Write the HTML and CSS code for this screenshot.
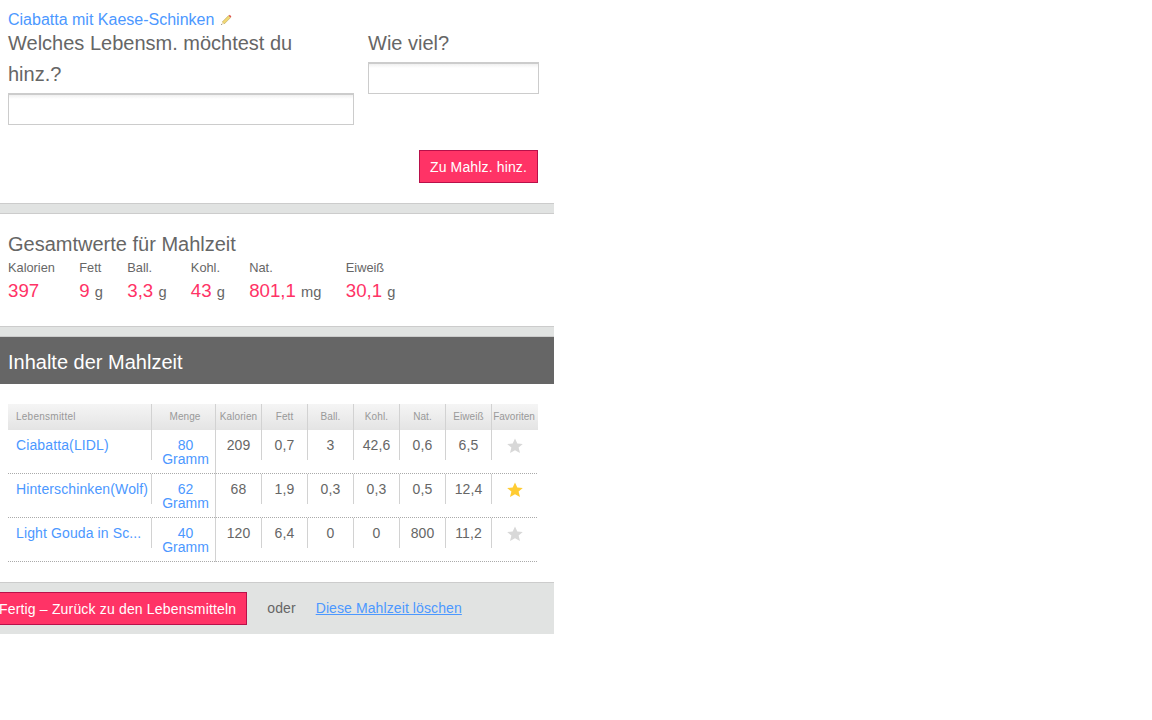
FILE: index.html
```html
<!DOCTYPE html>
<html lang="de">
<head>
<meta charset="utf-8">
<title>Mahlzeit</title>
<link rel="stylesheet" href="styles.css">
</head>
<body>
<main class="page">
  <section class="add">
    <div class="meal-name">
      <a href="#" class="link">Ciabatta mit Kaese-Schinken</a>
      <svg class="pencil" width="12" height="12" viewBox="0 0 12 12" aria-hidden="true">
        <path d="M2.200 8 8.600 1.600l2 2L4.200 10z" fill="#f2d873" stroke="#a8964f" stroke-width=".5"/>
        <path d="m8.800 1.800 1-1 1.600 1.600-1 1z" fill="#e0504f"/>
        <path d="M2.200 8 1.200 11l3-1z" fill="#f1e2c0"/>
        <path d="M1.500 10.100 1.200 11l.9-.3z" fill="#333"/>
      </svg>
    </div>
    <div class="fields">
      <label class="field field-food">
        <span class="q">Welches Lebensm. möchtest du hinz.?</span>
        <input class="input" type="text">
      </label>
      <label class="field field-qty">
        <span class="q">Wie viel?</span>
        <input class="input" type="text">
      </label>
    </div>
    <div class="add-action"><button class="btn" type="button">Zu Mahlz. hinz.</button></div>
  </section>

  <div class="bar"></div>

  <section class="totals">
    <h2 class="q totals-title">Gesamtwerte für Mahlzeit</h2>
    <div class="stats">
      <div><div class="stat-label">Kalorien</div><div class="stat-val">397</div></div>
      <div><div class="stat-label">Fett</div><div class="stat-val">9 <span class="unit">g</span></div></div>
      <div><div class="stat-label">Ball.</div><div class="stat-val">3,3 <span class="unit">g</span></div></div>
      <div><div class="stat-label">Kohl.</div><div class="stat-val">43 <span class="unit">g</span></div></div>
      <div><div class="stat-label">Nat.</div><div class="stat-val">801,1 <span class="unit">mg</span></div></div>
      <div><div class="stat-label">Eiweiß</div><div class="stat-val">30,1 <span class="unit">g</span></div></div>
    </div>
  </section>

  <div class="bar"></div>
  <h2 class="contents-head">Inhalte der Mahlzeit</h2>

  <div class="table-wrap">
    <table class="tbl">
      <colgroup>
        <col class="c-name"><col class="c-qty"><col class="c-n"><col class="c-n"><col class="c-n"><col class="c-n"><col class="c-n"><col class="c-n"><col class="c-n">
      </colgroup>
      <thead>
        <tr>
          <th class="th-name">Lebensmittel</th><th class="th-qty">Menge</th><th>Kalorien</th><th>Fett</th><th>Ball.</th><th>Kohl.</th><th>Nat.</th><th>Eiweiß</th><th class="last">Favoriten</th>
        </tr>
      </thead>
      <tbody>
        <tr>
          <td><div class="cell cell-name"><a href="#" class="link">Ciabatta(LIDL)</a></div></td>
          <td class="td-qty"><div class="qty"><a href="#" class="link">80<br>Gramm</a></div></td>
          <td><div class="cell">209</div></td><td><div class="cell">0,7</div></td><td><div class="cell">3</div></td><td><div class="cell">42,6</div></td><td><div class="cell">0,6</div></td><td><div class="cell">6,5</div></td>
          <td><div class="cell last"><svg class="star" viewBox="0 0 16 16" width="16" height="16" aria-hidden="true"><path d="M8 .5 10.300 5.500 15.800 6 11.600 9.600 13 15 8 12.200 3 15 4.400 9.600 .2 6 5.700 5.500z"/></svg></div></td>
        </tr>
        <tr>
          <td><div class="cell cell-name"><a href="#" class="link">Hinterschinken(Wolf)</a></div></td>
          <td class="td-qty"><div class="qty"><a href="#" class="link">62<br>Gramm</a></div></td>
          <td><div class="cell">68</div></td><td><div class="cell">1,9</div></td><td><div class="cell">0,3</div></td><td><div class="cell">0,3</div></td><td><div class="cell">0,5</div></td><td><div class="cell">12,4</div></td>
          <td><div class="cell last"><svg class="star on" viewBox="0 0 16 16" width="16" height="16" aria-hidden="true"><path d="M8 .5 10.300 5.500 15.800 6 11.600 9.600 13 15 8 12.200 3 15 4.400 9.600 .2 6 5.700 5.500z"/></svg></div></td>
        </tr>
        <tr>
          <td><div class="cell cell-name"><a href="#" class="link">Light Gouda in Sc...</a></div></td>
          <td class="td-qty"><div class="qty"><a href="#" class="link">40<br>Gramm</a></div></td>
          <td><div class="cell">120</div></td><td><div class="cell">6,4</div></td><td><div class="cell">0</div></td><td><div class="cell">0</div></td><td><div class="cell">800</div></td><td><div class="cell">11,2</div></td>
          <td><div class="cell last"><svg class="star" viewBox="0 0 16 16" width="16" height="16" aria-hidden="true"><path d="M8 .5 10.300 5.500 15.800 6 11.600 9.600 13 15 8 12.200 3 15 4.400 9.600 .2 6 5.700 5.500z"/></svg></div></td>
        </tr>
      </tbody>
    </table>
  </div>

  <footer class="foot">
    <button class="btn btn-done" type="button">Fertig – Zurück zu den Lebensmitteln</button>
    <span class="or">oder</span>
    <a href="#" class="link link-del">Diese Mahlzeit löschen</a>
  </footer>
</main>
</body>
</html>
```
FILE: styles.css
```css
* { box-sizing: border-box; }
html, body { margin: 0; padding: 0; background: #fff; }
body { font-family: "Liberation Sans", Arial, sans-serif; color: #666; font-size: 14px; }
.page { width: 554px; }
.link { color: #4c98ff; text-decoration: none; }

.add { padding: 11px 0 20px 8px; }
.meal-name { font-size: 16px; line-height: 17px; height: 17px; display: flex; align-items: center; gap: 6px; }
.pencil { flex: none; }
.fields { display: flex; gap: 14px; align-items: flex-start; }
.field { display: block; }
.field-food { width: 346px; }
.field-qty { width: 171px; }
.q { display: block; font-size: 20px; line-height: 31px; font-weight: normal; margin: 0; color: #666; }
.field .q { margin-bottom: 3px; }
.field-food .q { max-width: 320px; }
.input { display: block; width: 100%; height: 32px; padding: 0 4px; border: 1px solid #ccc; border-top-width: 2px; background: linear-gradient(#f0f0f0, #fff 4px); outline: none; border-radius: 0; }
.add-action { display: flex; justify-content: flex-end; padding-right: 16px; margin-top: 25px; }
.btn { display: block; height: 33px; padding: 0 10px; background: #ff3366; border: 1px solid #b8104a; color: #fff; font: 14px/33px "Liberation Sans", Arial, sans-serif; letter-spacing: .14px; border-radius: 0; white-space: nowrap; }

.bar { height: 11px; background: #e1e3e2; border-top: 1px solid #ccc; border-bottom: 1px solid #ccc; }

.totals { padding: 16px 0 0 8px; height: 112px; }
.totals-title { line-height: 29px; margin-bottom: 3px; }
.stats { display: flex; gap: 24.3px; }
.stat-label { font-size: 12.8px; line-height: 12px; height: 15px; color: #666; }
.stat-val { font-size: 18.67px; line-height: 27px; color: #ff3366; white-space: nowrap; }
.unit { font-size: 14.67px; color: #666; }

.contents-head { margin: 0; height: 47px; padding-left: 8px; background: #666; color: #fff; font-size: 20px; font-weight: normal; line-height: 50px; }

.table-wrap { padding: 20px 16px 20px 8px; }
.tbl { width: 530px; border-collapse: separate; border-spacing: 0; table-layout: fixed; }
.c-name { width: 144px; }
.c-qty { width: 64px; }
.c-n { width: 46px; }
.tbl th { height: 26px; padding: 0 0 2px; font-size: 10px; letter-spacing: .1px; font-weight: normal; color: #999; text-align: center; white-space: nowrap; background: linear-gradient(#f5f5f5, #e4e4e4); border-right: 1px solid #d2d2d2; }
.tbl th.th-name { text-align: left; padding-left: 8px; letter-spacing: .25px; }
.tbl th.th-qty { padding-left: 3px; }
.tbl th.last { border-right: 0; padding-right: 2px; letter-spacing: 0; }
.tbl tbody tr { background: repeating-linear-gradient(to right, #aaa 0 1px, transparent 1px 2px) left bottom / 100% 1px no-repeat; }
.tbl td { padding: 0; height: 44px; vertical-align: top; text-align: center; font-size: 14px; color: #666; }
.cell { height: 30px; padding-top: 7px; line-height: 16px; letter-spacing: .1px; border-right: 1px solid #d2d2d2; }
.cell.last { border-right: 0; padding-top: 8px; }
.cell-name { text-align: left; padding-left: 8px; white-space: nowrap; letter-spacing: .12px; }
.td-qty { border-right: 1px solid #d2d2d2; }
.qty { padding: 8px 0 0 4px; line-height: 14px; }
.star { display: inline-block; vertical-align: top; fill: #d8d8d8; }
.star.on { fill: #ffcc33; }

.foot { height: 52px; background: #e1e3e2; border-top: 1px solid #ccc; display: flex; align-items: flex-start; padding-top: 9px; font-size: 14px; letter-spacing: .1px; }
.btn-done { flex: none; margin-left: -12px; letter-spacing: .17px; }
.or { margin-left: 20px; line-height: 33px; }
.link-del { margin-left: 20px; line-height: 33px; text-decoration: underline; }
```
